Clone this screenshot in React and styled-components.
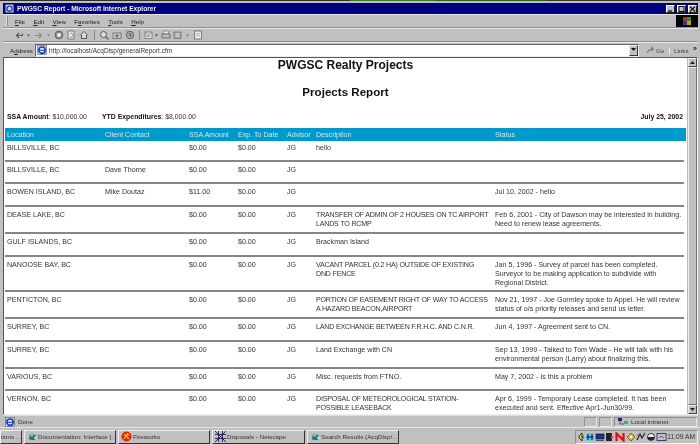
import React from "react";
import styled, { createGlobalStyle } from "styled-components";

const Global = createGlobalStyle`
  html, body { margin: 0; padding: 0; background: #c0c0c0; }
  * { box-sizing: border-box; }
`;

const Screen = styled.div`
  width: 700px; height: 444px; overflow: hidden; display: flex; flex-direction: column;
  background: #c0c0c0; font-family: "Liberation Sans", Arial, sans-serif; font-size: 6.25px; color: #2c2c2c;
  filter: blur(0.3px);
`;
const DesktopStrip = styled.div`
  height: 1px; flex: none;
  background: linear-gradient(90deg, #30302c 0 50%, #3c7a30 50% 62%, #2f5f2a 62% 78%, #3a3a30 78%);
`;
const Window = styled.div`
  flex: none; height: 427px; padding: 2px 2px 0 3px; display: flex; flex-direction: column;
  border-bottom: 1px solid #e4e4e4;
`;
const TitleBar = styled.div`
  flex: none; height: 11px; background: #000080; display: flex; align-items: center; padding: 0 1px 0 2px; gap: 2px;
  color: #f2f2f2; font-weight: 700; font-size: 6.65px;
`;
const TitleText = styled.span` flex: 1; white-space: nowrap; padding-left: 1px; `;
const WinBtn = styled.span`
  width: 9px; height: 8px; background: #c0c0c0; border: 1px solid; border-color: #fff #222 #222 #fff;
  display: flex; align-items: center; justify-content: center;
`;
const MenuRow = styled.div`
  flex: none; height: 14px; display: flex; align-items: stretch; border-top: 1px solid #e8e8e8; border-bottom: 1px solid #8f8f8f;
`;
const Grip = styled.i`
  flex: none; width: 2px; margin: 1px ${p => p.$mr}px 1px 3px; background: #e4e4e4; border-right: 1px solid #888;
`;
const MenuItems = styled.div` flex: 1; display: flex; align-items: center; gap: 8.3px; color: #222; `;
const MenuLabel = styled.span` & u { text-decoration: underline; text-underline-offset: 1px; } `;
const Throbber = styled.div`
  flex: none; width: 22px; background: #050505; display: flex; align-items: center; justify-content: center;
`;
const ToolRow = styled.div`
  flex: none; height: 14px; display: flex; align-items: center; border-top: 1px solid #e8e8e8; border-bottom: 1px solid #8f8f8f;
`;
const ToolIcons = styled.div` display: flex; align-items: center; `;
const Tool = styled.span`
  display: flex; align-items: center; justify-content: center; width: ${p => p.$w}px; height: 11px; margin-right: 1px;
`;
const ToolSep = styled.i` width: 1px; height: 10px; background: #8a8a8a; margin: 0 3px 0 2px; `;
const AddressRow = styled.div`
  flex: none; height: 15px; display: flex; align-items: center; border-top: 1px solid #e8e8e8; padding-right: 1px;
`;
const AddressLabel = styled.span` margin-right: 3px; color: #222; width: 22px; white-space: nowrap; `;
const AddressBox = styled.div`
  flex: 1; height: 13px; background: #fff; display: flex; align-items: center; gap: 2px; padding-left: 1px; color: #333;
  border: 1px solid; border-color: #666 #eee #eee #666;
`;
const AddressText = styled.span` flex: 1; white-space: nowrap; font-size: 6.5px; `;
const DropBtn = styled.span`
  width: 9px; height: 11px; background: #c0c0c0; border: 1px solid; border-color: #eee #333 #333 #eee;
  display: flex; align-items: center; justify-content: center;
`;
const GoBtn = styled.span` flex: none; display: flex; align-items: center; gap: 1px; width: 30px; padding-left: 7px; color: #444; `;
const LinksBtn = styled.span`
  flex: none; display: flex; align-items: center; justify-content: space-between; width: 28px; padding: 0 0 0 4px; color: #444;
  border-left: 1px solid #eee;
  & b { font-size: 7px; color: #222; margin-top: -3px; }
`;
const ContentFrame = styled.div`
  flex: 1; min-height: 0; display: flex; border: 1px solid; border-color: #555 #eee #eee #555;
`;
const Page = styled.main`
  flex: 1; min-width: 0; background: #fff; overflow: hidden; padding: 0 3px 0 1px; font-size: 7.1px; color: #333;
`;
const Heading = styled.h1`
  margin: 0; text-align: center; font-size: ${p => p.$size}px; line-height: 15px; font-weight: 700; color: #111;
  padding-top: ${p => p.$top}px; transform: translateX(1px);
`;
const Summary = styled.div`
  display: flex; align-items: center; height: 10px; margin-top: 12px; padding: 0 1px 0 2px; color: #333; font-size: 6.9px;
  & b { color: #111; }
`;
const SummaryItem = styled.span` width: ${p => p.$w}px; white-space: nowrap; `;
const SummaryDate = styled.b` margin-left: auto; `;
const cols = "98px 84px 49px 49px 29px 179px 1fr";
const HeaderRow = styled.div`
  display: grid; grid-template-columns: ${cols}; height: 13px; margin-top: 7px; align-items: center;
  background: #0099cc; color: #c8e8f4; padding-left: 2px; margin-right: -2px;
`;
const Row = styled.div`
  display: grid; grid-template-columns: ${cols}; min-height: ${p => p.$h}px; padding: ${p => p.$top}px 0 0 2px;
  line-height: 9px; border-bottom: 2px solid #868686; align-content: start;
`;
const Cell = styled.div` white-space: pre; letter-spacing: ${p => p.$tight ? "-0.2px" : "normal"}; `;

const headers = ["Location", "Client Contact", "SSA Amount", "Exp. To Date", "Advisor", "Description", "Status"];
const rows = [
  { h: 21, t: 3, loc: "BILLSVILLE, BC", c: "", a: "$0.00", d: "hello", s: "" },
  { h: 22, t: 4, loc: "BILLSVILLE, BC", c: "Dave Thorne", a: "$0.00", d: "", s: "" },
  { h: 23, t: 4, loc: "BOWEN ISLAND, BC", c: "Mike Doutaz", a: "$11.00", d: "", s: "Jul 10, 2002 - hello" },
  { h: 27, t: 4, loc: "DEASE LAKE, BC", c: "", a: "$0.00", d: "TRANSFER OF ADMIN OF 2 HOUSES ON TC AIRPORT\nLANDS TO RCMP", s: "Feb 6, 2001 - City of Dawson may be interested in building.\nNeed to renew lease agreements." },
  { h: 23, t: 4, loc: "GULF ISLANDS, BC", c: "", a: "$0.00", d: "Brackman Island", s: "" },
  { h: 35, t: 4, loc: "NANOOSE BAY, BC", c: "", a: "$0.00", d: "VACANT PARCEL (0.2 HA) OUTSIDE OF EXISTING\nDND FENCE", s: "Jan 5, 1996 - Survey of parcel has been completed.\nSurveyor to be making application to subdivide with\nRegional District." },
  { h: 27, t: 4, loc: "PENTICTON, BC", c: "", a: "$0.00", d: "PORTION OF EASEMENT RIGHT OF WAY TO ACCESS\nA HAZARD BEACON,AIRPORT", s: "Nov 21, 1997 - Joe Gormley spoke to Appel. He will review\nstatus of o/s priority releases and send us letter." },
  { h: 23, t: 4, loc: "SURREY, BC", c: "", a: "$0.00", d: "LAND EXCHANGE BETWEEN F.R.H.C. AND C.N.R.", s: "Jun 4, 1997 - Agreement sent to CN." },
  { h: 27, t: 4, loc: "SURREY, BC", c: "", a: "$0.00", d: "Land Exchange with CN", s: "Sep 13, 1999 - Talked to Tom Wade - He will talk with his\nenvironmental person (Larry) about finalizing this." },
  { h: 22, t: 4, loc: "VARIOUS, BC", c: "", a: "$0.00", d: "Misc. requests from FTNO.", s: "May 7, 2002 - Is this a problem" },
  { h: 27, t: 4, loc: "VERNON, BC", c: "", a: "$0.00", d: "DISPOSAL OF METEOROLOGICAL STATION-\nPOSSIBLE LEASEBACK", s: "Apr 6, 1999 - Temporary Lease completed. It has been\nexecuted and sent. Effective Apr1-Jun30/99." },
];

const Scrollbar = styled.div`
  flex: none; width: 10px; display: flex; flex-direction: column; background: #d8d8d8;
  border-left: 1px solid #bbb;
`;
const ScrollBtn = styled.span`
  flex: none; width: 9px; height: 9px; background: #c0c0c0; border: 1px solid; border-color: #eee #444 #444 #eee;
  display: flex; align-items: center; justify-content: center;
`;
const ScrollThumb = styled.span`
  flex: 1; width: 9px; background: #c0c0c0; border: 1px solid; border-color: #eee #777 #777 #eee;
`;
const StatusBar = styled.div`
  flex: none; height: 12px; display: flex; align-items: center; gap: 2px; padding: 0 1px; color: #333; border-top: 1px solid #ddd;
`;
const StatusMain = styled.div` flex: 1; display: flex; align-items: center; gap: 3px; padding-left: 1px; `;
const StatusCell = styled.div`
  height: 10px; width: ${p => p.$w}px; display: flex; align-items: center; gap: 2px; padding-left: 3px; white-space: nowrap;
  border: 1px solid; border-color: #909090 #e8e8e8 #e8e8e8 #909090;
`;
const Taskbar = styled.footer`
  flex: 1; display: flex; align-items: center; padding: 1px 0 0 0; gap: 2px; color: #333;
`;
const TaskButton = styled.div`
  flex: none; width: ${p => p.$w}px; height: 14px; display: flex; align-items: center; gap: 1px; padding-left: ${p => p.$pad ?? 2}px; white-space: nowrap; overflow: hidden;
  background: #c0c0c0; border: 1px solid; border-color: #eee #333 #333 #eee;
  justify-content: ${p => p.$end ? "flex-end" : "flex-start"};
`;
const Tray = styled.div`
  margin-left: auto; margin-right: 2px; width: 123px; height: 14px; display: flex; align-items: center; padding-left: 1px;
  border: 1px solid; border-color: #909090 #eee #eee #909090;
`;
const Clock = styled.span` margin-left: auto; margin-right: 2px; color: #333; white-space: nowrap; font-size: 6.7px; `;

const S = ({ w = 10, h = 10, children }) => <svg width={w} height={h} viewBox={`0 0 ${w} ${h}`} style={{ flex: "none", display: "block" }}>{children}</svg>;

const IEIcon = () => (
  <S>
    <rect x="0.5" y="0.5" width="9" height="9" fill="#d8e4f0" stroke="#556" strokeWidth=".6" />
    <circle cx="5" cy="5.2" r="3.2" fill="none" stroke="#1a3fc0" strokeWidth="1.6" />
    <path d="M2 5.3h6" stroke="#1a3fc0" strokeWidth="1" />
    <path d="M7.5 1.2l1.5 1" stroke="#d8a020" strokeWidth="1" />
  </S>
);
const Globe = () => (
  <S><circle cx="5" cy="5" r="3.6" fill="#7fb5b5" /><path d="M1.5 3.5c2 0 2 3 3.5 3S6 3 8.5 3.5M2 7c2-1 4 1 6 0" stroke="#0f5a5a" strokeWidth="1.2" fill="none" /><path d="M0.5 5l2-2M9.5 5l-2 2" stroke="#fff" strokeWidth=".8" /></S>
);
const Fire = () => (
  <S w={11} h={11}><circle cx="5.5" cy="5.5" r="5" fill="#e02010" /><path d="M3 8l4-6M2.5 4h6M5 5l3 3" stroke="#ffd040" strokeWidth="1.1" /></S>
);
const Nets = () => (
  <S w={11} h={11}><rect width="11" height="11" fill="#d8c860" /><path d="M0 3.5h11M0 7.5h11M3.5 0v11M7.5 0v11M0 0l11 11M11 0L0 11" stroke="#202070" strokeWidth=".9" /></S>
);
const tools = [
  { w: 11, i: <S><path d="M8.5 3.5v2H3M5 3L2.5 5.5 5 8" stroke="#556" strokeWidth="1.1" fill="none" /></S> },
  { w: 7, i: <S w={5}><path d="M1 4.5h3L2.5 6.5z" fill="#555" /></S> },
  { w: 11, i: <S><path d="M1.5 5.5h6M5 3l2.5 2.5L5 8" stroke="#8a8a8a" strokeWidth="1.1" fill="none" /></S> },
  { w: 7, i: <S w={5}><path d="M1 4.5h3L2.5 6.5z" fill="#888" /></S> },
  { w: 11, i: <S><circle cx="5" cy="5" r="4" fill="#8a8a8a" stroke="#444" strokeWidth=".6" /><circle cx="5" cy="5" r="2" fill="#eee" /></S> },
  { w: 11, i: <S><path d="M2 1h6v8H2z" fill="#eee" stroke="#555" strokeWidth=".7" /><path d="M3.5 6.5a2 2 0 1 0 0-2.5" stroke="#5a7" strokeWidth=".9" fill="none" /></S> },
  { w: 14, i: <S><path d="M1 5.5L5 1.5l4 4M2.5 5v3.5h5V5" fill="#ddd" stroke="#444" strokeWidth=".9" /></S> },
  null,
  { w: 12, i: <S><circle cx="4.5" cy="4.5" r="3" fill="#cfe0e0" stroke="#555" strokeWidth="1" /><path d="M6.5 6.5l3 3" stroke="#666" strokeWidth="1.3" /></S> },
  { w: 12, i: <S><rect x="1" y="3" width="8" height="5.5" fill="#ccc" stroke="#666" strokeWidth=".8" /><path d="M5 3.5l.8 1.6 1.6.2-1.2 1 .3 1.4L5 7l-1.5.7.3-1.4-1.2-1 1.6-.2z" fill="#a55" /></S> },
  { w: 12, i: <S><circle cx="5" cy="5" r="3.7" fill="#aaa" stroke="#444" strokeWidth=".7" /><path d="M5 3v2.2l1.6 1" stroke="#222" strokeWidth=".8" fill="none" /><path d="M1 1h3" stroke="#6a6" strokeWidth="1" /></S> },
  null,
  { w: 11, i: <S><rect x="1" y="2" width="7" height="6.5" fill="#e4e4e4" stroke="#777" strokeWidth=".8" /><path d="M1 2l3.5 3L8 2" stroke="#777" strokeWidth=".7" fill="none" /><path d="M2 6h4" stroke="#86a" strokeWidth="1" /></S> },
  { w: 4, i: <S w={4}><path d="M0 4.5h3L1.5 6.5z" fill="#444" /></S> },
  { w: 11, i: <S><path d="M2.5 1h5v3h-5z" fill="#eee" stroke="#666" strokeWidth=".6" /><rect x="1" y="4" width="8" height="4" fill="#bbb" stroke="#555" strokeWidth=".7" /></S> },
  { w: 11, i: <S><rect x="1" y="2" width="7" height="6.5" fill="#aaa" stroke="#666" strokeWidth=".7" /><path d="M2.5 4h4M2.5 6h4" stroke="#eee" strokeWidth=".8" /></S> },
  { w: 7, i: <S w={5}><path d="M1 4.5h3L2.5 6.5z" fill="#777" /></S> },
  { w: 11, i: <S><rect x="1.5" y="1" width="7" height="8" fill="#e8e8e8" stroke="#666" strokeWidth=".8" /><path d="M3 3.5h4M3 5.5h4" stroke="#9ab" strokeWidth=".8" /></S> },
];
const trayIcons = [
  <S w={8}><path d="M5 1L2 4v2l3 3zM6 3.5v3" stroke="#111" strokeWidth=".8" fill="#e0d040" /></S>,
  <S><rect x="1" y="1" width="8" height="8" fill="#60d0d0" /><path d="M3 2v6M7 2v6M1.5 5h7" stroke="#106" strokeWidth="1" /></S>,
  <S><rect x="1" y="2" width="8" height="5" fill="#1830a0" stroke="#111" strokeWidth=".7" /><path d="M1 8.5h8" stroke="#555" strokeWidth="1" /></S>,
  <S><rect x="1" y="1" width="6" height="8" fill="#222" /><path d="M6 3l3 2-3 2z" fill="#e020d0" /></S>,
  <S w={11}><path d="M1.5 9V1.5L8.5 8.5V1" stroke="#e01010" strokeWidth="2.2" fill="none" /></S>,
  <S><path d="M5 1l4 4-4 4-4-4z" fill="#e0b820" stroke="#444" strokeWidth=".7" /><circle cx="5" cy="5" r="1.3" fill="#fff" /></S>,
  <S><path d="M1 8l3-6 2 4 3-5" stroke="#222" strokeWidth="1.2" fill="none" /><path d="M1 3h3" stroke="#c22" strokeWidth="1" /></S>,
  <S><circle cx="5" cy="5" r="3.8" fill="#223" /><path d="M2 5a3 3 0 0 1 6 0z" fill="#eee" /></S>,
  <S w={11}><rect x="1" y="1.5" width="9" height="7" fill="#b8c4e4" stroke="#334" strokeWidth=".9" /><path d="M3 6l2-2 3 2" stroke="#a22" strokeWidth=".8" fill="none" /></S>,
];

export default function App() {
  return (
    <Screen>
      <Global />
      <DesktopStrip />
      <Window>
        <TitleBar>
          <S w={9} h={9}><rect x=".5" y=".5" width="8" height="8" fill="#c8d4f0" /><circle cx="4.5" cy="4.7" r="2.6" fill="none" stroke="#2040c0" strokeWidth="1.4" /><path d="M6.5 1l1.5 1" stroke="#e0a020" /></S>
          <TitleText>PWGSC Report - Microsoft Internet Explorer</TitleText>
          <WinBtn><S w={7} h={6}><path d="M1 5h4" stroke="#111" strokeWidth="1.3" /></S></WinBtn>
          <WinBtn><S w={7} h={6}><rect x="1" y=".5" width="5" height="5" fill="none" stroke="#111" /></S></WinBtn>
          <WinBtn><S w={7} h={6}><path d="M1 .5l5 5M6 .5l-5 5" stroke="#111" strokeWidth="1.1" /></S></WinBtn>
        </TitleBar>
        <MenuRow>
          <Grip $mr={7} />
          <MenuItems>
            <MenuLabel><u>F</u>ile</MenuLabel>
            <MenuLabel><u>E</u>dit</MenuLabel>
            <MenuLabel><u>V</u>iew</MenuLabel>
            <MenuLabel>F<u>a</u>vorites</MenuLabel>
            <MenuLabel><u>T</u>ools</MenuLabel>
            <MenuLabel><u>H</u>elp</MenuLabel>
          </MenuItems>
          <Throbber>
            <S><path d="M1 1h4v4H1z" fill="#b03020" /><path d="M5 1h4v4H5z" fill="#3a8a30" /><path d="M1 5h4v4H1z" fill="#2040a0" /><path d="M5 5h4v4H5z" fill="#c0a020" /></S>
          </Throbber>
        </MenuRow>
        <ToolRow>
          <Grip $mr={5} />
          <ToolIcons>
            {tools.map((t, i) => t ? <Tool key={i} $w={t.w}>{t.i}</Tool> : <ToolSep key={i} />)}
          </ToolIcons>
        </ToolRow>
        <AddressRow>
          <Grip $mr={2} />
          <AddressLabel>A<u>d</u>dress</AddressLabel>
          <AddressBox>
            <IEIcon />
            <AddressText>http://localhost/AcqDisp/generalReport.cfm</AddressText>
            <DropBtn><S w={5} h={4}><path d="M0 0h5L2.5 3z" fill="#111" /></S></DropBtn>
          </AddressBox>
          <GoBtn><S w={9} h={9}><path d="M1.5 7C2 4 4 3 7 3M5 1l2.5 2L5 5" stroke="#666" strokeWidth="1" fill="none" /></S>Go</GoBtn>
          <LinksBtn>Links<b>»</b></LinksBtn>
        </AddressRow>
        <ContentFrame>
          <Page>
            <Heading $top={0} $size={12}>PWGSC Realty Projects</Heading>
            <Heading $top={11} $size={11.6}>Projects Report</Heading>
            <Summary>
              <SummaryItem $w={95}><b>SSA Amount</b>: $10,000.00</SummaryItem>
              <SummaryItem $w={150}><b>YTD Expenditures</b>: $8,000.00</SummaryItem>
              <SummaryDate>July 25, 2002</SummaryDate>
            </Summary>
            <HeaderRow>{headers.map(h => <span key={h}>{h}</span>)}</HeaderRow>
            {rows.map((r, i) => (
              <Row key={i} $h={r.h} $top={r.t}>
                <Cell>{r.loc}</Cell>
                <Cell>{r.c}</Cell>
                <Cell>{r.a}</Cell>
                <Cell>$0.00</Cell>
                <Cell>JG</Cell>
                <Cell $tight={r.d === r.d.toUpperCase()}>{r.d}</Cell>
                <Cell>{r.s}</Cell>
              </Row>
            ))}
          </Page>
          <Scrollbar>
            <ScrollBtn><S w={5} h={4}><path d="M0 3h5L2.5 0z" fill="#222" /></S></ScrollBtn>
            <ScrollThumb />
            <ScrollBtn><S w={5} h={4}><path d="M0 0h5L2.5 3z" fill="#222" /></S></ScrollBtn>
          </Scrollbar>
        </ContentFrame>
        <StatusBar>
          <StatusMain><IEIcon />Done</StatusMain>
          <StatusCell $w={13} />
          <StatusCell $w={13} />
          <StatusCell $w={83}><S w={11} h={8}><rect x="0" y="0" width="4" height="3" fill="#226" /><rect x="6" y="3" width="4" height="3" fill="#3aa" /><path d="M2 3v3h4" stroke="#555" fill="none" /></S>Local intranet</StatusCell>
        </StatusBar>
      </Window>
      <Taskbar>
        <TaskButton $w={22} $pad={0} $end>tions ...</TaskButton>
        <TaskButton $w={92}><Globe />Documentation: Interface [...</TaskButton>
        <TaskButton $w={92}><Fire />Fireworks</TaskButton>
        <TaskButton $w={93}><Nets />Disposals - Netscape</TaskButton>
        <TaskButton $w={92}><Globe />Search Results (AcqDisp/...</TaskButton>
        <Tray>
          {trayIcons.map((t, i) => <React.Fragment key={i}>{t}</React.Fragment>)}
          <Clock>11:09 AM</Clock>
        </Tray>
      </Taskbar>
    </Screen>
  );
}
